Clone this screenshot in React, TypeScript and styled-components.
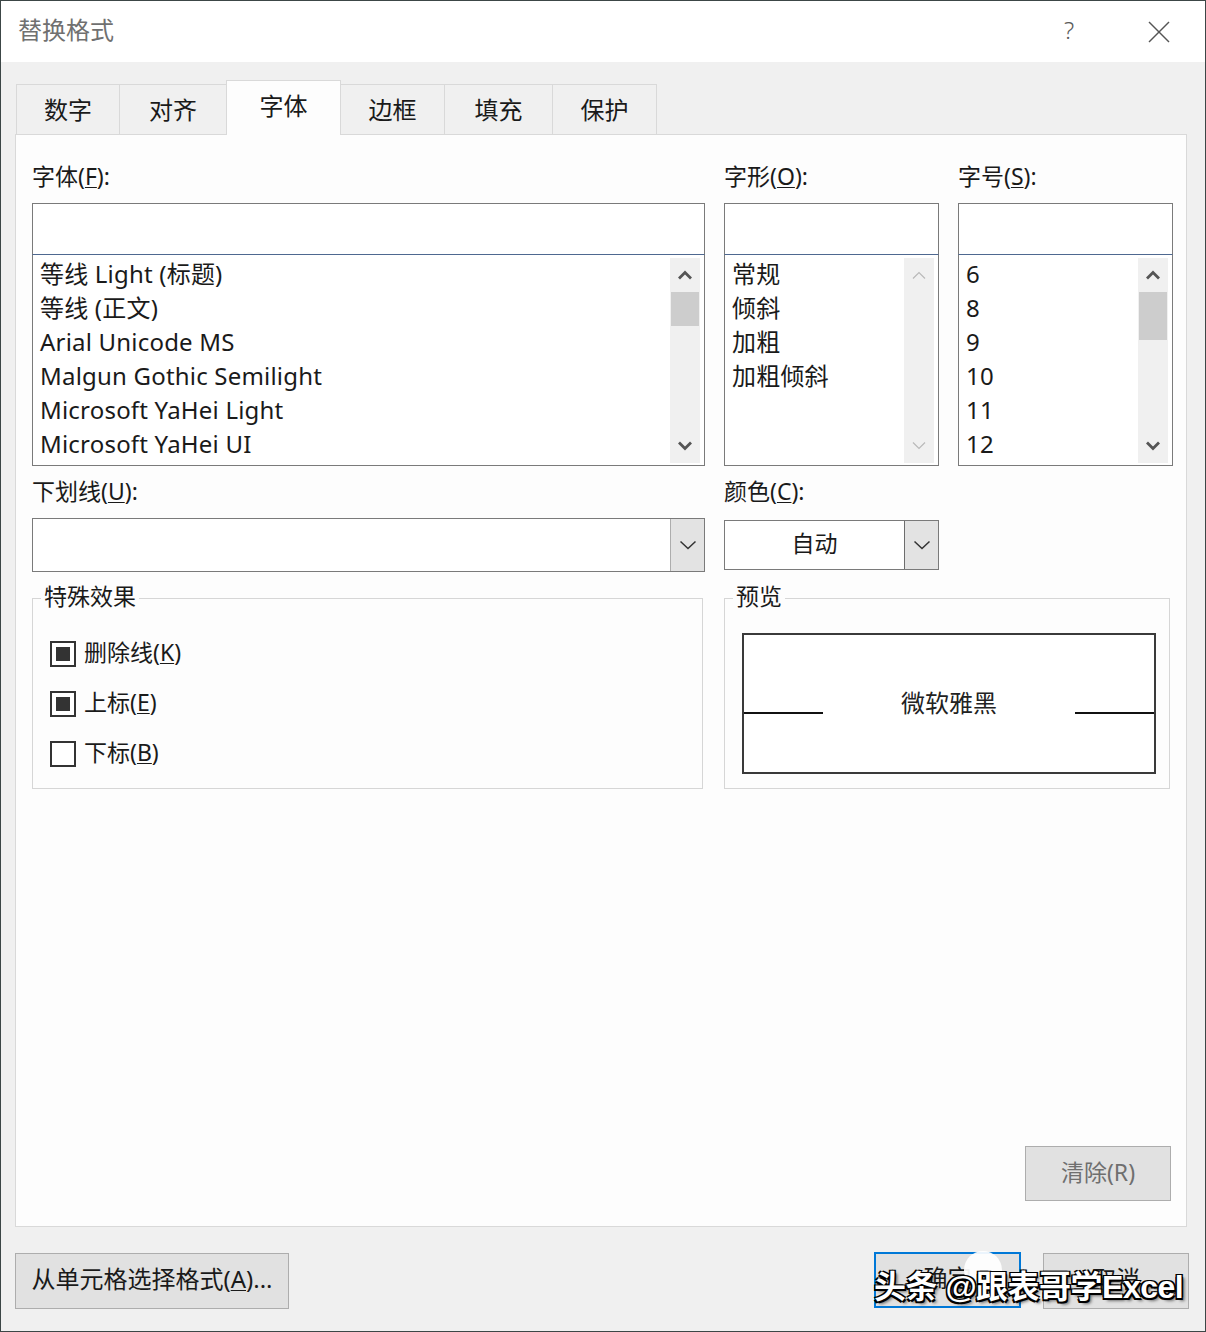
import React from "react";
import styled, { createGlobalStyle, css } from "styled-components";

const GlobalStyle = createGlobalStyle`
  body {
    margin: 0;
    background: #ffffff;
  }
  * {
    box-sizing: border-box;
  }
`;

const FONT = `"Noto Sans", "Noto Sans CJK SC", "Liberation Sans", sans-serif`;

const tabs = [
  { label: "数字", width: 104 },
  { label: "对齐", width: 108 },
  { label: "字体", width: 115, active: true },
  { label: "边框", width: 105 },
  { label: "填充", width: 109 },
  { label: "保护", width: 105 },
];

const fontItems = [
  "等线 Light (标题)",
  "等线 (正文)",
  "Arial Unicode MS",
  "Malgun Gothic Semilight",
  "Microsoft YaHei Light",
  "Microsoft YaHei UI",
];
const styleItems = ["常规", "倾斜", "加粗", "加粗倾斜"];
const sizeItems = ["6", "8", "9", "10", "11", "12"];

const effects = [
  { label: "删除线", key: "K", checked: true },
  { label: "上标", key: "E", checked: true },
  { label: "下标", key: "B", checked: false },
];

const Chevron: React.FC<{ up?: boolean; disabled?: boolean }> = ({ up, disabled }) => (
  <svg width="16" height="10" viewBox="0 0 16 10">
    <polyline
      points={up ? "2,8.5 8,2.5 14,8.5" : "2,1.5 8,7.5 14,1.5"}
      fill="none"
      stroke={disabled ? "#b9b9b9" : "#555555"}
      strokeWidth={disabled ? 1.2 : 2.8}
    />
  </svg>
);

const DropChevron = () => (
  <svg width="18" height="10" viewBox="0 0 18 10">
    <polyline points="1.5,1.5 9,8.5 16.5,1.5" fill="none" stroke="#333" strokeWidth="1.5" />
  </svg>
);

const CloseIcon = () => (
  <svg width="22" height="22" viewBox="0 0 22 22">
    <line x1="1" y1="1" x2="21" y2="21" stroke="#555" strokeWidth="1.4" />
    <line x1="21" y1="1" x2="1" y2="21" stroke="#555" strokeWidth="1.4" />
  </svg>
);

interface ListProps {
  items: string[];
  thumb?: number;
  disabled?: boolean;
}

const ListBox: React.FC<ListProps> = ({ items, thumb, disabled }) => (
  <List>
    <Items>
      {items.map((item) => (
        <Item key={item}>{item}</Item>
      ))}
    </Items>
    <ScrollBar>
      <Arrow>
        <Chevron up disabled={disabled} />
      </Arrow>
      {thumb ? <Thumb $height={thumb} /> : null}
      <Track />
      <Arrow>
        <Chevron disabled={disabled} />
      </Arrow>
    </ScrollBar>
  </List>
);

const Label: React.FC<{ text: string; mnemonic: string }> = ({ text, mnemonic }) => (
  <FieldLabel>
    {text}(<U>{mnemonic}</U>):
  </FieldLabel>
);

const App: React.FC = () => {
  return (
    <>
      <GlobalStyle />
      <Window>
        <TitleBar>
          <Title>替换格式</Title>
          <Controls>
            <Help>?</Help>
            <Close>
              <CloseIcon />
            </Close>
          </Controls>
        </TitleBar>

        <Body>
          <TabRow>
            {tabs.map((t) => (
              <Tab key={t.label} $width={t.width} $active={!!t.active}>
                {t.label}
              </Tab>
            ))}
          </TabRow>

          <Panel>
            <FieldGrid>
              <Column>
                <Label text="字体" mnemonic="F" />
                <InputBox />
                <ListBox items={fontItems} thumb={34} />
              </Column>
              <Column>
                <Label text="字形" mnemonic="O" />
                <InputBox />
                <ListBox items={styleItems} disabled />
              </Column>
              <Column>
                <Label text="字号" mnemonic="S" />
                <InputBox />
                <ListBox items={sizeItems} thumb={48} />
              </Column>
            </FieldGrid>

            <SelectRow>
              <Column>
                <Label text="下划线" mnemonic="U" />
                <Select $height={54}>
                  <SelectValue />
                  <DropButton>
                    <DropChevron />
                  </DropButton>
                </Select>
              </Column>
              <Column>
                <Label text="颜色" mnemonic="C" />
                <Select $height={50} $offset={2}>
                  <SelectValue>自动</SelectValue>
                  <DropButton $framed>
                    <DropChevron />
                  </DropButton>
                </Select>
              </Column>
            </SelectRow>

            <GroupRow>
              <Group>
                <Legend>特殊效果</Legend>
                <EffectList>
                  {effects.map((e) => (
                    <EffectRow key={e.key}>
                      <CheckBox>{e.checked ? <CheckFill /> : null}</CheckBox>
                      <EffectText>
                        {e.label}(<U>{e.key}</U>)
                      </EffectText>
                    </EffectRow>
                  ))}
                </EffectList>
              </Group>
              <Group>
                <Legend>预览</Legend>
                <PreviewArea>
                  <PreviewBox>
                    <BaseLine />
                    <PreviewText>微软雅黑</PreviewText>
                    <BaseLine />
                  </PreviewBox>
                </PreviewArea>
              </Group>
            </GroupRow>

            <ClearButton>清除(R)</ClearButton>
          </Panel>

          <Footer>
            <Button $width={274}>
              从单元格选择格式(<U>A</U>)...
            </Button>
            <RightButtons>
              <Button $width={147} $primary>
                确定
              </Button>
              <Button $width={146}>取消</Button>
            </RightButtons>
          </Footer>
        </Body>

        <Watermark>
          <Avatar />
          <WatermarkText>头条 @跟表哥学Excel</WatermarkText>
        </Watermark>
      </Window>
    </>
  );
};

const Window = styled.div`
  position: relative;
  width: 1206px;
  height: 1332px;
  border: 1px solid #3c4646;
  background: #f0f0f0;
  display: flex;
  flex-direction: column;
  font-family: ${FONT};
  color: #1a1a1a;
  overflow: hidden;
`;

const TitleBar = styled.div`
  height: 61px;
  flex-shrink: 0;
  background: #ffffff;
  display: flex;
  align-items: center;
  padding-left: 17px;
  padding-right: 16px;
`;

const Title = styled.div`
  font-size: 24px;
  line-height: 30px;
  color: #707070;
  margin-top: -3px;
`;

const Controls = styled.div`
  margin-left: auto;
  display: flex;
  align-items: center;
  gap: 30px;
`;

const Help = styled.div`
  width: 60px;
  text-align: center;
  font-size: 24px;
  line-height: 30px;
  font-weight: 300;
  color: #5a5a5a;
  margin-top: -4px;
`;

const Close = styled.div`
  width: 60px;
  height: 40px;
  display: flex;
  align-items: center;
  justify-content: center;
`;

const Body = styled.div`
  flex: 1;
  display: flex;
  flex-direction: column;
  padding: 18px 18px 0 14px;
  min-height: 0;
`;

const TabRow = styled.div`
  display: flex;
  align-items: flex-end;
  height: 55px;
  margin-left: 2px;
  margin-bottom: -1px;
  position: relative;
  z-index: 1;
`;

const Tab = styled.div<{ $width: number; $active: boolean }>`
  width: ${(p) => p.$width}px;
  margin-left: -1px;
  display: flex;
  align-items: center;
  justify-content: center;
  font-size: 24px;
  line-height: 30px;
  border: 1px solid #d9d9d9;
  border-bottom: none;
  ${(p) =>
    p.$active
      ? css`
          height: 55px;
          background: #fdfdfd;
          padding-bottom: 4px;
        `
      : css`
          height: 50px;
          margin-bottom: 1px;
          background: #f0f0f0;
          padding-bottom: 0;
        `}
`;

const Panel = styled.div`
  flex: 1;
  min-height: 0;
  display: flex;
  flex-direction: column;
  background: #fdfdfd;
  border: 1px solid #d9d9d9;
  padding: 27px 13px 0 16px;
`;

const FieldGrid = styled.div`
  display: grid;
  grid-template-columns: 673px 215px 215px;
  column-gap: 19px;
`;

const Column = styled.div`
  display: flex;
  flex-direction: column;
`;

const FieldLabel = styled.div`
  height: 30px;
  line-height: 28px;
  font-size: 23px;
  margin-bottom: 11px;
  white-space: nowrap;
`;

const U = styled.span`
  text-decoration: underline;
  text-underline-offset: 2px;
  text-decoration-thickness: 1px;
`;

const InputBox = styled.div`
  height: 51px;
  background: #ffffff;
  border: 1px solid #7a7a7a;
  border-bottom: none;
`;

const List = styled.div`
  height: 212px;
  display: flex;
  background: #ffffff;
  border: 1px solid #7a7a7a;
  border-top-color: #4e6890;
`;

const Items = styled.div`
  flex: 1;
  padding: 2px 0 0 7px;
  overflow: hidden;
`;

const Item = styled.div`
  height: 34px;
  line-height: 34px;
  font-size: 24px;
  letter-spacing: 0.2px;
  white-space: nowrap;
`;

const ScrollBar = styled.div`
  width: 30px;
  margin: 3px 4px 2px 0;
  background: #f0f0f0;
  display: flex;
  flex-direction: column;
`;

const Arrow = styled.div`
  height: 34px;
  display: flex;
  align-items: center;
  justify-content: center;
`;

const Thumb = styled.div<{ $height: number }>`
  height: ${(p) => p.$height}px;
  margin: 0 1px;
  background: #cdcdcd;
`;

const Track = styled.div`
  flex: 1;
`;

const SelectRow = styled.div`
  display: grid;
  grid-template-columns: 673px 215px;
  column-gap: 19px;
  margin-top: 11px;
`;

const Select = styled.div<{ $height: number; $offset?: number }>`
  height: ${(p) => p.$height}px;
  margin-top: ${(p) => p.$offset ?? 0}px;
  display: flex;
  background: #ffffff;
  border: 1px solid #7a7a7a;
`;

const SelectValue = styled.div`
  flex: 1;
  display: flex;
  align-items: center;
  justify-content: center;
  font-size: 23px;
  line-height: 30px;
  padding-bottom: 5px;
`;

const DropButton = styled.div<{ $framed?: boolean }>`
  width: 34px;
  display: flex;
  align-items: center;
  justify-content: center;
  background: #e3e3e3;
  border-left: 1px solid ${(p) => (p.$framed ? "#6d6d6d" : "#adadad")};
`;

const GroupRow = styled.div`
  display: grid;
  grid-template-columns: 671px 446px;
  column-gap: 21px;
  margin-top: 11px;
`;

const Group = styled.fieldset`
  margin: 0;
  padding: 0;
  min-width: 0;
  border: 1px solid #d6d6d6;
`;

const Legend = styled.legend`
  margin-left: 8px;
  padding: 0 3px 4px;
  line-height: 26px;
  font-size: 23px;
`;

const EffectList = styled.div`
  padding: 16px 0 9px 17px;
  display: flex;
  flex-direction: column;
`;

const EffectRow = styled.div`
  height: 50px;
  display: flex;
  align-items: center;
  gap: 8px;
  font-size: 23px;
`;

const EffectText = styled.span`
  line-height: 30px;
  padding-bottom: 5px;
`;

const CheckBox = styled.div`
  width: 26px;
  height: 26px;
  border: 2px solid #333333;
  background: #ffffff;
  display: flex;
  align-items: center;
  justify-content: center;
`;

const CheckFill = styled.div`
  width: 14px;
  height: 14px;
  background: #333333;
`;

const PreviewArea = styled.div`
  padding: 20px 13px 13px 17px;
`;

const PreviewBox = styled.div`
  height: 141px;
  border: 2px solid #3a3a3a;
  background: #ffffff;
  display: flex;
  align-items: center;
`;

const BaseLine = styled.div`
  width: 79px;
  height: 2px;
  margin-top: 18px;
  background: #111111;
`;

const PreviewText = styled.div`
  flex: 1;
  text-align: center;
  font-size: 24px;
  line-height: 30px;
  padding-bottom: 2px;
  color: #222222;
`;

const ClearButton = styled.div`
  margin-top: auto;
  margin-bottom: 25px;
  margin-right: 2px;
  align-self: flex-end;
  width: 146px;
  height: 55px;
  display: flex;
  align-items: center;
  justify-content: center;
  font-size: 23px;
  line-height: 30px;
  padding-bottom: 4px;
  color: #6f6f6f;
  background: #e1e1e1;
  border: 1px solid #adadad;
`;

const Footer = styled.div`
  height: 104px;
  flex-shrink: 0;
  display: flex;
  align-items: flex-start;
  padding-top: 26px;
`;

const RightButtons = styled.div`
  margin-left: auto;
  margin-right: -2px;
  display: flex;
  align-items: flex-start;
  gap: 22px;
`;

const Button = styled.div<{ $width: number; $primary?: boolean }>`
  width: ${(p) => p.$width}px;
  height: 56px;
  display: flex;
  align-items: center;
  justify-content: center;
  font-size: 24px;
  line-height: 30px;
  padding-bottom: 4px;
  white-space: nowrap;
  background: #e1e1e1;
  border: ${(p) => (p.$primary ? "2px solid #0078d7" : "1px solid #adadad")};
  ${(p) =>
    p.$primary &&
    css`
      margin-top: -1px;
    `}
`;

const Watermark = styled.div`
  position: absolute;
  left: 873px;
  top: 1264px;
  width: 320px;
  height: 54px;
  pointer-events: none;
`;

const Avatar = styled.div`
  position: absolute;
  left: 90px;
  top: -14px;
  width: 38px;
  height: 38px;
  border-radius: 50%;
  background: rgba(255, 255, 255, 0.92);
`;

const WatermarkText = styled.div`
  position: relative;
  font-family: "Liberation Sans", "Noto Sans CJK SC", sans-serif;
  font-size: 32px;
  line-height: 44px;
  font-weight: 700;
  letter-spacing: -0.5px;
  white-space: nowrap;
  color: #ffffff;
  text-shadow: 1.5px 1.5px 0 #000, -1.5px -1.5px 0 #000, 1.5px -1.5px 0 #000,
    -1.5px 1.5px 0 #000, 3px 3px 3px rgba(0, 0, 0, 0.5);
`;

export default App;
